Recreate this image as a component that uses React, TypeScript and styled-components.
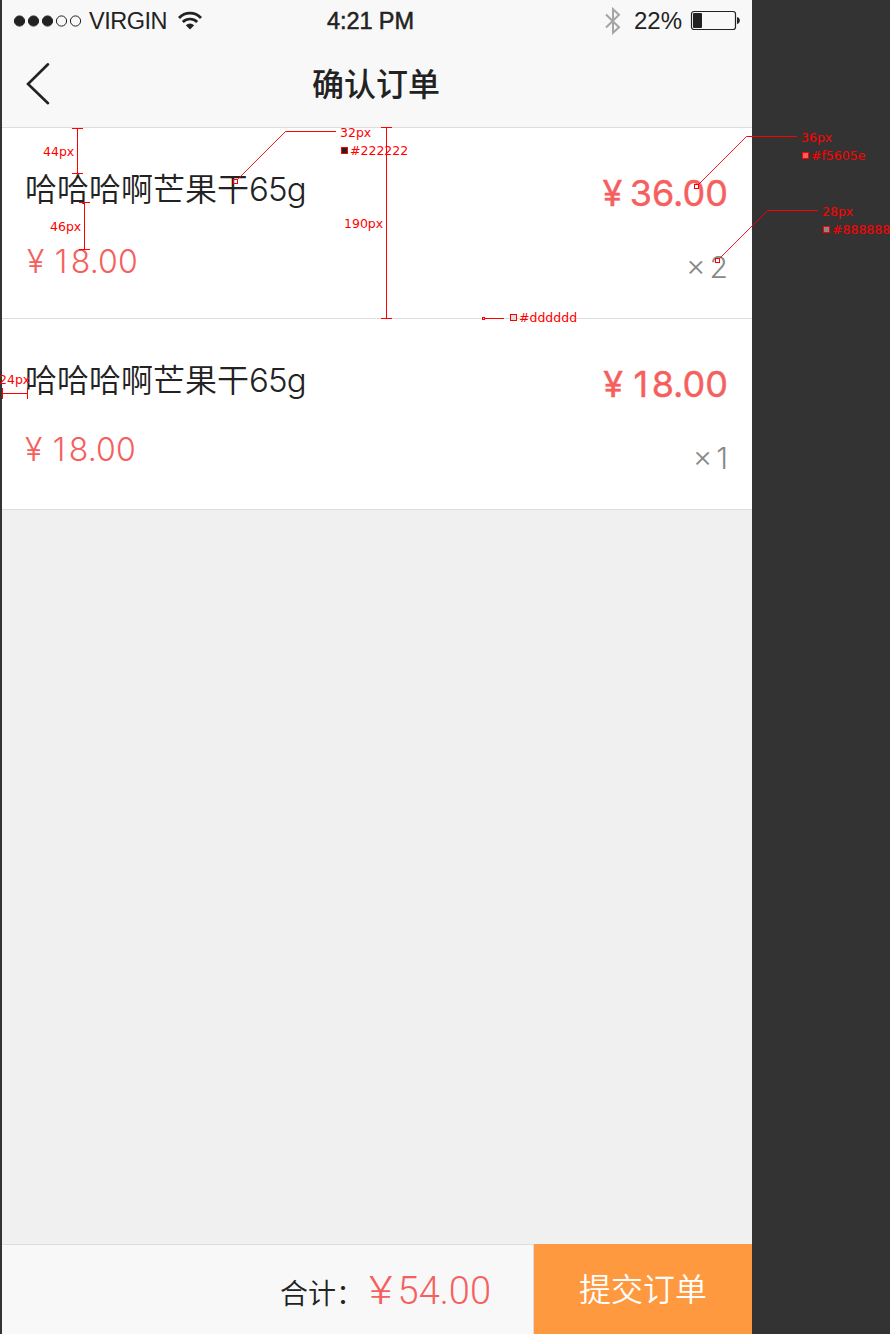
import React from "react";
import styled, { createGlobalStyle } from "styled-components";

const Global = createGlobalStyle`
  * { box-sizing: border-box; }
  body { margin: 0; background: #333; }
`;

const Board = styled.main`
  position: relative;
  width: 890px;
  height: 1334px;
  padding-left: 2px;
  overflow: hidden;
  background: #333;
`;

const Phone = styled.div`
  display: flex;
  flex-direction: column;
  width: 750px;
  height: 1334px;
  background: #f0f0f0;
  color: #222;
  font-family: Inter, "Noto Sans CJK SC", sans-serif;
  white-space: nowrap;
`;

const Header = styled.header`
  height: 128px;
  border-bottom: 1px solid #ddd;
  background: #f8f8f8;
`;

const StatusBar = styled.div`
  display: grid;
  grid-template: 41px / 250px 1fr 250px;
  align-items: center;
  padding: 0 12px 0 11px;
  font: 23.5px/41px "Liberation Sans", sans-serif;
`;

const StatusGroup = styled.div<{ $end?: boolean }>`
  display: flex;
  align-items: center;
  justify-content: ${(p) => (p.$end ? "flex-end" : "flex-start")};
  height: 41px;
`;

const Carrier = styled.span`
  margin: 0 11px 0 6px;
  line-height: 39px;
  padding-top: 2px;
  letter-spacing: -0.5px;
`;

const Clock = styled.time`
  text-align: center;
  line-height: 39px;
  padding: 2px 12px 0 0;
  letter-spacing: -0.1px;
  -webkit-text-stroke: 0.5px #222;
`;

const Percent = styled.span`
  margin: 0 8px 0 13px;
  font-size: 24px;
`;

const NavBar = styled.nav`
  display: grid;
  grid-template-columns: 60px 1fr 60px;
  align-items: center;
  height: 86px;
`;

const BackButton = styled.button`
  display: flex;
  padding: 0 0 0 23px;
  border: 0;
  background: none;
`;

const Title = styled.h1`
  margin: 0;
  padding-right: 2px;
  text-align: center;
  font: 500 32px/82px "Noto Sans CJK SC", sans-serif;
  height: 86px;
`;

const Item = styled.article`
  display: flex;
  justify-content: space-between;
  height: 191px;
  padding: 0 24px 0 23px;
  border-bottom: 1px solid #ddd;
  background: #fff;
`;

const Info = styled.div`
  padding-top: 39px;
`;

const Name = styled.h2`
  margin: 0;
  font: 350 32px/40px "Noto Sans CJK SC", sans-serif;
`;

const Weight = styled.span`
  font-family: Inter, sans-serif;
  font-size: 33px;
  font-weight: 300;
  letter-spacing: -0.8px;
`;

const One = styled.span`
  margin: 0 0.1em 0 0.08em;
`;

const UnitPrice = styled.div<{ $top: number; $left: number }>`
  margin: ${(p) => p.$top}px 0 0 ${(p) => p.$left}px;
  font-size: 32px;
  font-weight: 300;
  line-height: 40px;
  letter-spacing: 0.2px;
  word-spacing: -1.6px;
  color: #f5605e;
`;

const Amounts = styled.div`
  padding-top: 43px;
  text-align: right;
`;

const Subtotal = styled.div`
  font-size: 36px;
  font-weight: 400;
  line-height: 44px;
  word-spacing: -2.6px;
  -webkit-text-stroke: 0.4px #f5605e;
  color: #f5605e;
`;

const Quantity = styled.div`
  margin-top: 32px;
  font-size: 30px;
  font-weight: 300;
  line-height: 40px;
  word-spacing: -4.5px;
  color: #888;
`;

const Footer = styled.footer`
  display: flex;
  height: 90px;
  margin-top: auto;
`;

const Total = styled.div`
  display: flex;
  flex: 1;
  align-items: baseline;
  justify-content: flex-end;
  padding-right: 42px;
  border-top: 1px solid #ddd;
  border-right: 1px solid #ddd;
  background: #f8f8f8;
  line-height: 90px;
`;

const TotalLabel = styled.span`
  font: 350 28px/92px "Noto Sans CJK SC", sans-serif;
`;

const TotalValue = styled.span`
  font: 300 38px/92px Roboto, sans-serif;
  color: #f5605e;
`;

const TotalCurrency = styled.span`
  display: inline-block;
  margin: 0 7px 0 7px;
  transform: scaleX(1.2);
`;

const Submit = styled.button`
  width: 218px;
  height: 90px;
  padding: 0 0 4px;
  border: 0;
  background: #ff993f;
  color: #fff;
  font: 350 32px/86px "Noto Sans CJK SC", sans-serif;
`;

const Overlay = styled.svg`
  position: absolute;
  inset: 0;
`;

const Note = styled.span<{ $x: number; $y: number }>`
  position: absolute;
  left: ${(p) => p.$x}px;
  top: ${(p) => p.$y}px;
  font: 12.5px/16px "DejaVu Sans", sans-serif;
  color: #f00;
  white-space: nowrap;
`;

const products = [
  { unit: "18.00", sum: "36.00", count: 2, top: 33, left: 2 },
  { unit: "18.00", sum: "18.00", count: 1, top: 30, left: 0 },
];

const notes = [
  { x: 43, y: 144, text: "44px" },
  { x: 50, y: 219, text: "46px" },
  { x: 340, y: 125, text: "32px" },
  { x: 350, y: 143, text: "#222222" },
  { x: 344, y: 216, text: "190px" },
  { x: 519, y: 310, text: "#dddddd" },
  { x: 801, y: 130, text: "36px" },
  { x: 811, y: 148, text: "#f5605e" },
  { x: 822, y: 204, text: "28px" },
  { x: 832, y: 222, text: "#888888" },
  { x: -1, y: 372, text: "24px" },
];

const swatches = [
  { x: 341.5, y: 147.5, fill: "#222222" },
  { x: 510.5, y: 314.5, fill: "#dddddd" },
  { x: 802.5, y: 152.5, fill: "#f5605e" },
  { x: 823.5, y: 226.5, fill: "#888888" },
];

const Signal = () => (
  <svg width="70" height="14" viewBox="0 0 70 14">
    {[0, 1, 2, 3, 4].map((i) => (
      <circle key={i} cx={6.5 + i * 14} cy="7" r="5.1" fill={i < 3 ? "#222" : "none"} stroke="#222" strokeWidth="1" />
    ))}
  </svg>
);

const Wifi = () => (
  <svg width="24" height="20" viewBox="0 0 24 20" fill="none" stroke="#222" strokeWidth="2.7">
    <path d="M1 7C7 .6 17 .6 23 7" />
    <path d="M4.8 10.9C8.9 7 15.1 7 19.2 10.9" />
    <path d="M7.8 14.2Q12 10.7 16.2 14.2L12 18.5Z" fill="#222" stroke="none" />
  </svg>
);

const Bluetooth = () => (
  <svg width="16" height="28" viewBox="0 0 16 28" fill="none" stroke="#a5a5a5" strokeWidth="2">
    <path d="M1 7.5L14 20.2 8 25.8V2.2L14 7.8 1 20.5" />
  </svg>
);

const Battery = () => (
  <svg width="50" height="21" viewBox="0 0 50 21">
    <rect x="1.5" y="1.5" width="44" height="18" rx="2.5" fill="none" stroke="#222" strokeWidth="1.2" />
    <rect x="3" y="3" width="9" height="15" rx="1" fill="#222" />
    <path d="M47 7Q49.8 7.7 49.8 10.5T47 14Z" fill="#222" />
  </svg>
);

const Digits = ({ value }: { value: string }) => (
  <>
    {value.split("").map((c, i) => (c === "1" ? <One key={i}>1</One> : c))}
  </>
);

const Measurements = () => (
  <Overlay width="890" height="1334" fill="none" stroke="#f00" strokeWidth="1">
    <path d="M72 128.5H83M77.5 128V173M72 173.5H83" />
    <path d="M79 202.5H90M84.5 202V249M79 249.5H90" />
    <path d="M381 127.5H392M386.5 127V318M381 318.5H392" />
    <path d="M2.5 388V399M2 393.5H28M27.5 388V399" />
    <path d="M336 131.5H285.5M797 136.5H746.5M818 210.5H767.5" />
    <g strokeWidth="0.9">
      <path d="M285.5 131.5L237.5 179.5" />
      <path d="M746.5 136.5L698.5 184.5" />
      <path d="M767.5 210.5L719.5 258.5" />
    </g>
    <path d="M485 318.5H504" />
    <rect x="233.5" y="179.5" width="4" height="4" />
    <rect x="694.5" y="184.5" width="4" height="4" fill="#fff" />
    <rect x="715.5" y="258.5" width="4" height="4" fill="#fff" />
    <rect x="482.5" y="317.5" width="2" height="2" />
    {swatches.map((s) => (
      <rect key={s.fill} x={s.x} y={s.y} width="6" height="6" fill={s.fill} />
    ))}
  </Overlay>
);

export default function App() {
  return (
    <Board>
      <Global />
      <Phone>
        <Header>
          <StatusBar>
            <StatusGroup>
              <Signal />
              <Carrier>VIRGIN</Carrier>
              <Wifi />
            </StatusGroup>
            <Clock>4:21 PM</Clock>
            <StatusGroup $end>
              <Bluetooth />
              <Percent>22%</Percent>
              <Battery />
            </StatusGroup>
          </StatusBar>
          <NavBar>
            <BackButton aria-label="返回">
              <svg width="26" height="44" viewBox="0 0 26 44" fill="none" stroke="#222" strokeWidth="2.6" strokeLinecap="round">
                <path d="M23 2.3L3 22 23 41.2" />
              </svg>
            </BackButton>
            <Title>确认订单</Title>
          </NavBar>
        </Header>
        {products.map((p) => (
          <Item key={p.count}>
            <Info>
              <Name>
                哈哈哈啊芒果干<Weight>65g</Weight>
              </Name>
              <UnitPrice $top={p.top} $left={p.left}>
                ¥ <Digits value={p.unit} />
              </UnitPrice>
            </Info>
            <Amounts>
              <Subtotal>
                ¥ <Digits value={p.sum} />
              </Subtotal>
              <Quantity>
                × {p.count}
              </Quantity>
            </Amounts>
          </Item>
        ))}
        <Footer>
          <Total>
            <TotalLabel>合计：</TotalLabel>
            <TotalValue>
              <TotalCurrency>¥</TotalCurrency>54.00
            </TotalValue>
          </Total>
          <Submit>提交订单</Submit>
        </Footer>
      </Phone>
      <Measurements />
      {notes.map((n) => (
        <Note key={n.text} $x={n.x} $y={n.y}>
          {n.text}
        </Note>
      ))}
    </Board>
  );
}
